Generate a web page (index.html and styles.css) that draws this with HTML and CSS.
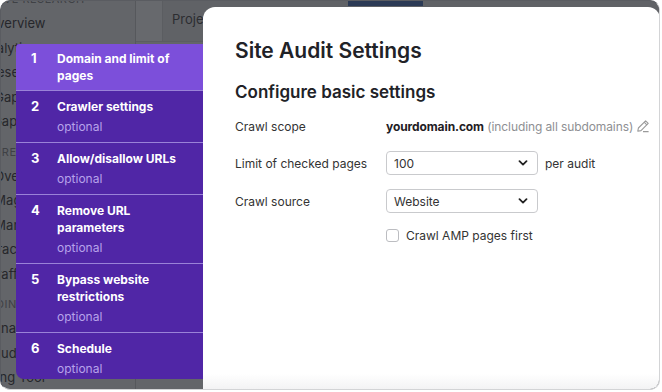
FILE: index.html
```html
<!DOCTYPE html>
<html lang="en">
<head>
<meta charset="UTF-8">
<title>Site Audit Settings</title>
<link rel="stylesheet" href="styles.css">
</head>
<body>
<div class="frame">
    <!-- appli en arrière-plan, assombrie -->
    <div class="app">
        <div class="sidebar">
            <div class="nav-head">COMPETITIVE RESEARCH</div>
            <div class="nav-item">Domain Overview</div>
            <div class="nav-item">Traffic Analytics</div>
            <div class="nav-item">Organic Research</div>
            <div class="nav-item">Keyword Gap</div>
            <div class="nav-item">Backlink Gap</div>
            <div class="nav-head">KEYWORD RESEARCH</div>
            <div class="nav-item">Keyword Overview</div>
            <div class="nav-item">Keyword Magic Tool</div>
            <div class="nav-item">Keyword Manager</div>
            <div class="nav-item">Position Tracking</div>
            <div class="nav-item">Organic Traffic Insights</div>
            <div class="nav-head">LINK BUILDING</div>
            <div class="nav-item">Backlink Analytics</div>
            <div class="nav-item">Backlink Audit</div>
            <div class="nav-item">Link Building Tool</div>
        </div>
        <div class="main">
            <div class="topbar">
                <div class="topbar-side"></div>
                <div class="topbar-title">Projects</div>
                <div class="topbar-tab"></div>
            </div>
        </div>
    </div>

    <!-- fenêtre des réglages -->
    <div class="modal">
        <div class="steps">
            <div class="step active">
                <span class="step-num">1</span>
                <div class="step-text">
                    <div class="step-title">Domain and limit of pages</div>
                </div>
            </div>
            <div class="step">
                <span class="step-num">2</span>
                <div class="step-text">
                    <div class="step-title">Crawler settings</div>
                    <div class="step-sub">optional</div>
                </div>
            </div>
            <div class="step">
                <span class="step-num">3</span>
                <div class="step-text">
                    <div class="step-title">Allow/disallow URLs</div>
                    <div class="step-sub">optional</div>
                </div>
            </div>
            <div class="step">
                <span class="step-num">4</span>
                <div class="step-text">
                    <div class="step-title">Remove URL parameters</div>
                    <div class="step-sub">optional</div>
                </div>
            </div>
            <div class="step">
                <span class="step-num">5</span>
                <div class="step-text">
                    <div class="step-title">Bypass website restrictions</div>
                    <div class="step-sub">optional</div>
                </div>
            </div>
            <div class="step">
                <span class="step-num">6</span>
                <div class="step-text">
                    <div class="step-title">Schedule</div>
                    <div class="step-sub">optional</div>
                </div>
            </div>
        </div>

        <div class="panel">
            <h1 class="panel-title">Site Audit Settings</h1>
            <h2 class="panel-subtitle">Configure basic settings</h2>
            <div class="form">
                <div class="label">Crawl scope</div>
                <div class="value scope">
                    <b>yourdomain.com</b>&nbsp;<span class="muted">(including all subdomains)</span>
                    <svg class="pencil" width="14" height="14" viewBox="0 0 14 14" fill="none" stroke="#9a9a9a" stroke-width="1.1" stroke-linejoin="round">
                        <path d="M9.6 1.8 L12.2 4.4 L5 11.6 L1.8 12.2 L2.4 9 Z"/>
                        <path d="M8.2 3.2 L10.8 5.8"/>
                        <path d="M7 12.6 H12.6"/>
                    </svg>
                </div>

                <div class="label">Limit of checked pages</div>
                <div class="value">
                    <div class="select">
                        <span>100</span>
                        <svg class="chevron" width="10" height="6" viewBox="0 0 10 6" fill="none" stroke="#222" stroke-width="1.8" stroke-linecap="round" stroke-linejoin="round"><path d="M1.5 1.2 L5 4.6 L8.5 1.2"/></svg>
                    </div>
                    <span class="per">per audit</span>
                </div>

                <div class="label">Crawl source</div>
                <div class="value">
                    <div class="select">
                        <span>Website</span>
                        <svg class="chevron" width="10" height="6" viewBox="0 0 10 6" fill="none" stroke="#222" stroke-width="1.8" stroke-linecap="round" stroke-linejoin="round"><path d="M1.5 1.2 L5 4.6 L8.5 1.2"/></svg>
                    </div>
                </div>

                <div class="label"></div>
                <div class="value">
                    <span class="checkbox"></span>
                    <span class="check-label">Crawl AMP pages first</span>
                </div>
            </div>
        </div>
    </div>
</div>
</body>
</html>
```

FILE: styles.css
```css
body {
    margin: 0;
    background-color: #fff;
    font-family: Inter, "Noto Sans", sans-serif;
}

.frame {
    position: relative;
    width: 658px;
    height: 388px;
    border: 1px solid #d3d4d6;
    border-top-color: #5a5c61;
    border-left-color: #5a5c61;
    border-radius: 10px;
    overflow: hidden;
    background-color: #636569;
}

/* ---- appli assombrie ---- */

.app {
    display: flex;
    height: 100%;
}

.sidebar {
    width: 134px;
    flex-shrink: 0;
    border-right: 1px solid #56585c;
    color: #26272b;
    font-size: 13px;
    white-space: nowrap;
    overflow: hidden;
}

.nav-item {
    height: 24.5px;
    line-height: 24.5px;
    margin-left: -64px;
}

.nav-head {
    height: 24px;
    line-height: 24px;
    font-size: 11px;
    letter-spacing: 0.5px;
    color: #3f4145;
    margin-left: -62px;
    margin-top: 6px;
}

.nav-head:first-child {
    margin-top: -14px;
}

.main {
    flex: 1;
    display: flex;
    flex-direction: column;
}

.topbar {
    position: relative;
    display: flex;
    height: 40px;
    border-bottom: 1px solid #5b5d61;
    background-color: #606266;
}

.topbar-side {
    width: 26px;
    border-right: 1px solid #5b5d61;
    background-color: #67696d;
}

.topbar-title {
    padding-left: 9px;
    line-height: 36px;
    font-size: 13px;
    color: #2c2d31;
}

.topbar-tab {
    position: absolute;
    top: 0;
    left: 212px;
    width: 75px;
    height: 5px;
    background-color: #2b3a55;
}

/* ---- fenêtre ---- */

.modal {
    position: absolute;
    top: 6px;
    left: 15px;
    right: 0;
    bottom: 0;
    display: flex;
}

.steps {
    width: 187px;
    flex-shrink: 0;
    margin-top: 37px;
    align-self: flex-start;
    background-color: #5026a6;
    border-radius: 4px 0 0 8px;
    overflow: hidden;
    height: 335px;
}

.step {
    display: flex;
    padding: 7px 8px 7px 15px;
    border-bottom: 1px solid #9a82d8;
    color: #fff;
    font-size: 12px;
}

.step:last-child {
    border-bottom: none;
}

.step.active {
    background-color: #7c4fda;
    padding-top: 6px;
    padding-bottom: 6px;
}

.step-num {
    width: 26px;
    flex-shrink: 0;
    font-weight: 700;
    line-height: 17px;
    font-size: 13px;
}

.step-title {
    font-weight: 700;
    line-height: 17px;
}

.step-sub {
    margin-top: 3px;
    line-height: 17px;
    color: #b7a3ea;
}

.panel {
    flex: 1;
    background-color: #fff;
    background-image: linear-gradient(to bottom, #fff 96%, #f3f3f4);
    border-radius: 12px 12px 0 0;
    padding: 31px 10px 0 32px;
    color: #212227;
}

.panel-title {
    margin: 0;
    font-size: 21px;
    line-height: 26px;
    font-weight: 600;
}

.panel-subtitle {
    margin: 16px 0 0;
    font-size: 17px;
    line-height: 24px;
    font-weight: 600;
}

.form {
    display: grid;
    grid-template-columns: 151px auto;
    grid-template-rows: 22px 24px 24px 16px;
    row-gap: 14px;
    margin-top: 11px;
    font-size: 12px;
    color: #333;
}

.label,
.value {
    display: flex;
    align-items: center;
    white-space: nowrap;
}

.value.scope {
    letter-spacing: -0.1px;
}

.value b {
    font-weight: 700;
    color: #1f2024;
}

.muted {
    color: #8e8f93;
}

.pencil {
    margin-left: 3px;
}

.select {
    box-sizing: border-box;
    display: flex;
    align-items: center;
    justify-content: space-between;
    width: 152px;
    height: 24px;
    padding: 0 9px 0 7px;
    border: 1px solid #c9cacd;
    border-radius: 4px;
}

.per {
    margin-left: 7px;
}

.checkbox {
    box-sizing: border-box;
    width: 13px;
    height: 13px;
    border: 1px solid #bcbdc1;
    border-radius: 3px;
}

.check-label {
    margin-left: 7px;
}
```
